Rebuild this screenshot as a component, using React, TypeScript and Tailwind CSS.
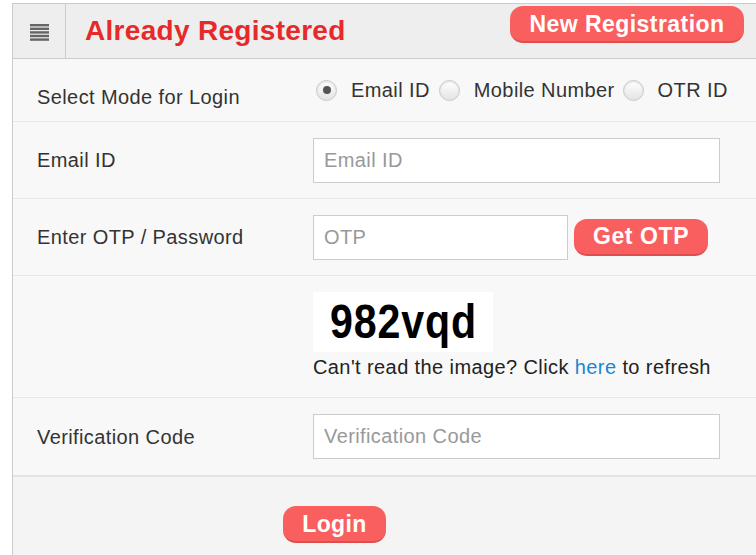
import React from "react";

function Radio({ checked }: { checked?: boolean }) {
  return (
    <span className="inline-flex items-center justify-center w-[21px] h-[21px] rounded-full border border-[#c8c8c8] bg-gradient-to-b from-[#ffffff] to-[#e4e4e4] shadow-[inset_0_1px_2px_rgba(0,0,0,0.12)] shrink-0">
      {checked && <span className="w-[8px] h-[8px] rounded-full bg-[#555]" />}
    </span>
  );
}

export default function App() {
  const font = { fontFamily: '"Liberation Sans", Arial, sans-serif' };
  return (
    <div className="w-[756px] h-[555px] bg-white overflow-hidden" style={font}>
      <div className="ml-[12px] mt-[3px] border-l border-t border-[#cccccc] bg-[#f8f8f8] h-[560px] flex flex-col">
        {/* Header */}
        <div className="h-[55px] bg-[#eeeeee] border-b border-[#cccccc] flex items-stretch shrink-0">
          <div className="w-[53px] border-r border-[#cccccc] flex items-center justify-center">
            <svg width="19" height="18" viewBox="0 0 19 18" className="mt-[4px]">
              <rect x="0" y="0" width="19" height="2.4" fill="#666" />
              <rect x="0" y="3.6" width="19" height="2.4" fill="#666" />
              <rect x="0" y="7.2" width="19" height="2.4" fill="#666" />
              <rect x="0" y="10.8" width="19" height="2.4" fill="#666" />
              <rect x="0" y="14.4" width="19" height="2.4" fill="#666" />
            </svg>
          </div>
          <div className="flex-1 flex items-start justify-between">
            <div className="ml-[19px] mt-[10px] text-[28px] leading-[34px] font-bold text-[#e62a2a] tracking-[0.3px]">
              Already Registered
            </div>
            <button className="mt-[2px] mr-[12px] h-[37px] w-[234px] rounded-[13px] bg-[#fa5f5f] border-b-2 border-[#df4e4e] text-white font-bold text-[23px] leading-[34px] tracking-[0.45px]">
              New Registration
            </button>
          </div>
        </div>

        {/* Row 1 */}
        <div className="h-[63px] border-b border-[#e8e8e8] flex items-start shrink-0 text-[20px] tracking-[0.4px] text-[#333]">
          <div className="w-[300px] pl-[24px] pt-[26px] leading-[24px]">
            Select Mode for Login
          </div>
          <div className="flex items-center pt-[19px] leading-[24px]">
            <span className="ml-[3px]" />
            <Radio checked />
            <span className="ml-[14px] mr-[9px]">Email ID</span>
            <Radio />
            <span className="ml-[14px] mr-[8px]">Mobile Number</span>
            <Radio />
            <span className="ml-[14px]">OTR ID</span>
          </div>
        </div>

        {/* Row 2 */}
        <div className="h-[77px] border-b border-[#e8e8e8] flex items-center shrink-0 text-[20px] tracking-[0.4px] text-[#333]">
          <div className="w-[300px] pl-[24px]">Email ID</div>
          <input
            className="w-[407px] h-[45px] border border-[#cccccc] bg-white px-[10px] text-[20px] tracking-[0.4px] text-[#333] placeholder:text-[#999] outline-none"
            placeholder="Email ID"
            style={font}
          />
        </div>

        {/* Row 3 */}
        <div className="h-[77px] border-b border-[#e8e8e8] flex items-center shrink-0 text-[20px] tracking-[0.4px] text-[#333]">
          <div className="w-[300px] pl-[24px]">Enter OTP / Password</div>
          <input
            className="w-[255px] h-[45px] border border-[#cccccc] bg-white px-[10px] text-[20px] tracking-[0.4px] text-[#333] placeholder:text-[#999] outline-none"
            placeholder="OTP"
            style={font}
          />
          <button className="ml-[6px] h-[37px] w-[134px] rounded-[13px] bg-[#fa5f5f] border-b-2 border-[#df4e4e] text-white font-bold text-[23px] leading-[34px] tracking-[0.6px]">
            Get OTP
          </button>
        </div>

        {/* Row 4 captcha */}
        <div className="h-[122px] border-b border-[#e8e8e8] flex shrink-0">
          <div className="w-[300px]" />
          <div className="pt-[16px]">
            <div className="w-[180px] h-[60px] bg-white flex items-center justify-center">
              <span
                className="inline-block font-bold text-[49px] leading-[49px] text-black scale-x-[0.84] tracking-[1px] mt-[-2px]"
                style={font}
              >
                982vqd
              </span>
            </div>
            <div className="text-[20px] tracking-[0.4px] leading-[28px] text-[#222] mt-[1px] whitespace-nowrap">
              Can't read the image? Click <span className="text-[#1a86d6]">here</span> to refresh
            </div>
          </div>
        </div>

        {/* Row 5 */}
        <div className="h-[77px] flex items-center shrink-0 text-[20px] tracking-[0.4px] text-[#333]">
          <div className="w-[300px] pl-[24px]">Verification Code</div>
          <input
            className="w-[407px] h-[45px] border border-[#cccccc] bg-white px-[10px] text-[20px] tracking-[0.4px] text-[#333] placeholder:text-[#999] outline-none"
            placeholder="Verification Code"
            style={font}
          />
        </div>

        {/* Footer */}
        <div className="flex-1 bg-[#f4f4f4] border-t-2 border-[#e4e4e4] pt-[29px]">
          <button className="ml-[270px] h-[37px] w-[103px] rounded-[13px] bg-[#fa5f5f] border-b-2 border-[#df4e4e] text-white font-bold text-[23px] leading-[34px] tracking-[0.4px]">
            Login
          </button>
        </div>
      </div>
    </div>
  );
}
